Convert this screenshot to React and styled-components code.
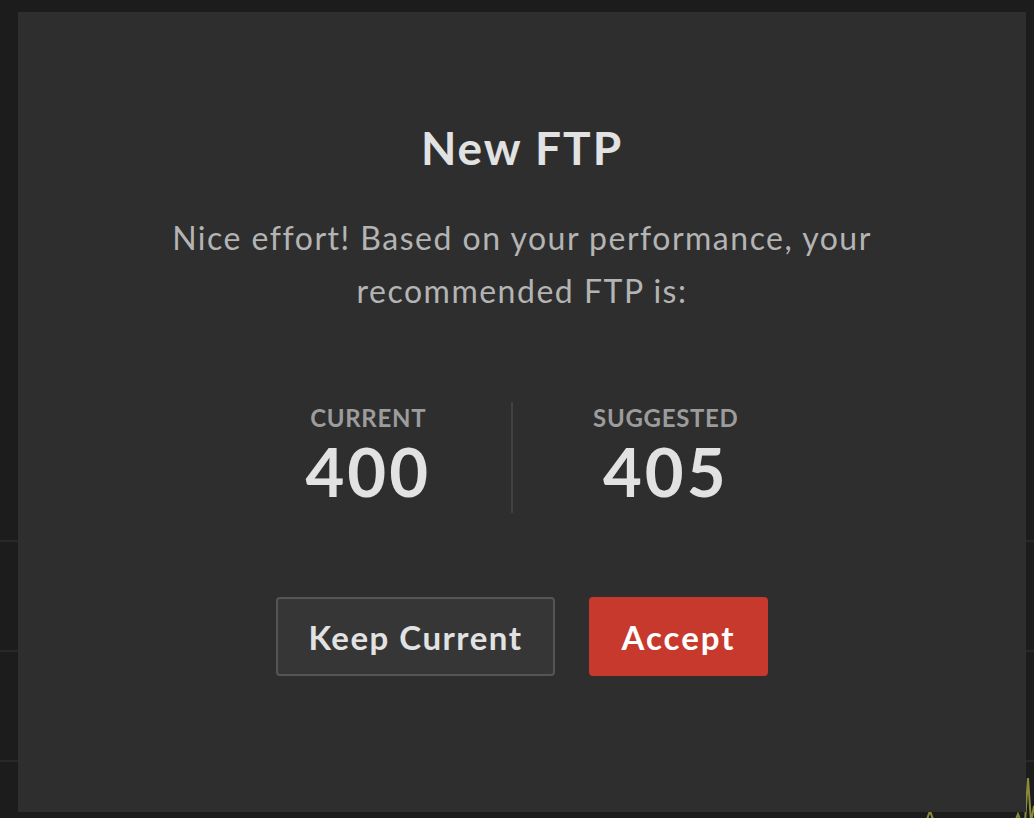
import React from "react";
import styled, { createGlobalStyle } from "styled-components";

const Global = createGlobalStyle`
  html, body { margin: 0; padding: 0; background: #1c1c1c; }
  body { font-family: Lato, "Open Sans", sans-serif; -webkit-font-smoothing: antialiased; }
  #root { width: 1034px; height: 818px; overflow: hidden; }
`;

const Page = styled.div`
  position: relative;
  width: 1034px;
  height: 818px;
  overflow: hidden;
  background: #1c1c1c;
`;

const Backdrop = styled.div`
  display: flex;
  flex-direction: column;
  height: 100%;
`;

const BackRow = styled.div`
  height: ${(p) => p.$h}px;
  flex: ${(p) => (p.$grow ? "1" : "none")};
  border-bottom: ${(p) => (p.$line ? "2px solid #282828" : "none")};
  position: relative;
`;

const Chart = styled.svg`
  position: absolute;
  left: 0;
  bottom: 0;
  width: 1034px;
  height: 56px;
`;

const Modal = styled.div`
  position: absolute;
  left: 18px;
  top: 12px;
  width: 1008px;
  height: 800px;
  background: #2e2e2e;
  display: flex;
  flex-direction: column;
  align-items: center;
  padding-top: 108px;
  box-sizing: border-box;
`;

const Title = styled.h1`
  margin: 0;
  font-size: 46px;
  line-height: 56px;
  font-weight: 700;
  letter-spacing: 2px;
  color: #e2e2e2;
`;

const Message = styled.p`
  margin: 35px 0 0;
  font-size: 32px;
  line-height: 53px;
  font-weight: 400;
  letter-spacing: 1.5px;
  color: #b4b4b4;
  text-align: center;
`;

const Stats = styled.div`
  display: flex;
  margin-top: 85px;
`;

const Stat = styled.div`
  display: flex;
  flex-direction: column;
  align-items: center;
  padding: 2px 80px 7px;
  border-left: ${(p) => (p.$divider ? "2px solid #414141" : "none")};
`;

const Label = styled.div`
  font-size: 24px;
  line-height: 28px;
  font-weight: 700;
  letter-spacing: 0.7px;
  color: #9c9c9c;
`;

const Value = styled.div`
  margin-top: 4px;
  font-size: 67px;
  line-height: 70px;
  font-weight: 700;
  letter-spacing: 3px;
  color: #e2e2e2;
`;

const Actions = styled.div`
  display: flex;
  gap: 34px;
  margin-top: 84px;
`;

const Button = styled.button`
  height: 79px;
  padding: 0 ${(p) => (p.$primary ? 30.5 : 30.5)}px;
  box-sizing: border-box;
  border-radius: 4px;
  border: 2px solid ${(p) => (p.$primary ? "#c8392d" : "#555555")};
  background: ${(p) => (p.$primary ? "#c8392d" : "#363636")};
  color: ${(p) => (p.$primary ? "#ffffff" : "#e2e2e2")};
  font-family: Lato, "Open Sans", sans-serif;
  font-size: 33px;
  font-weight: 700;
  letter-spacing: ${(p) => (p.$primary ? 2 : 1.5)}px;
  cursor: pointer;
`;

export default function App() {
  return (
    <Page>
      <Global />
      <Backdrop>
        <BackRow $h={540} $line />
        <BackRow $h={108} $line />
        <BackRow $h={108} $line />
        <BackRow $grow>
          <Chart viewBox="0 0 1034 56">
            <polyline
              points="926,60 930,49 934,60"
              fill="none"
              stroke="#8c8a3c"
              strokeWidth="2"
            />
            <polyline
              points="1015,60 1018,52 1021,60"
              fill="none"
              stroke="#8c8a3c"
              strokeWidth="2"
            />
            <polyline
              points="1025,60 1028,16 1031,60 1034,44"
              fill="none"
              stroke="#8c8a3c"
              strokeWidth="2"
            />
          </Chart>
        </BackRow>
      </Backdrop>
      <Modal>
        <Title>New FTP</Title>
        <Message>
          Nice effort! Based on your performance, your
          <br />
          recommended FTP is:
        </Message>
        <Stats>
          <Stat>
            <Label>CURRENT</Label>
            <Value>400</Value>
          </Stat>
          <Stat $divider>
            <Label>SUGGESTED</Label>
            <Value>405</Value>
          </Stat>
        </Stats>
        <Actions>
          <Button>Keep Current</Button>
          <Button $primary>Accept</Button>
        </Actions>
      </Modal>
    </Page>
  );
}
